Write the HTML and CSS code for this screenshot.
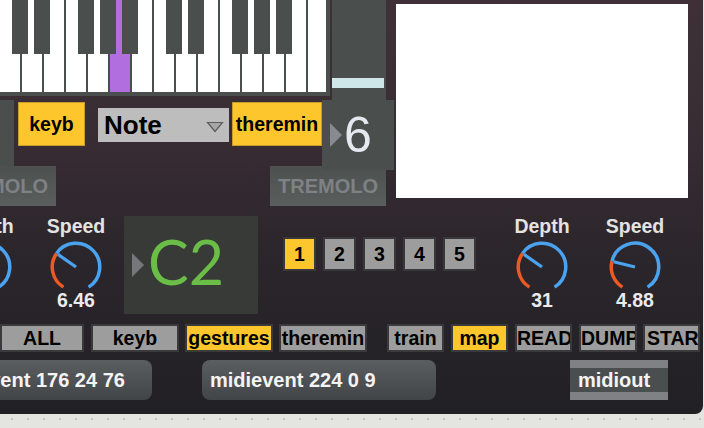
FILE: index.html
```html
<!DOCTYPE html>
<html>
<head>
<meta charset="utf-8">
<title>Patcher</title>
<link rel="stylesheet" href="styles.css">
</head>
<body>
<div class="patcher">
  <div class="top">
    <div class="left-col">
      <div class="row-a">
        <div class="keyboard">
          <div class="whites">
            <div class="wk"></div><div class="wk"></div><div class="wk"></div><div class="wk"></div><div class="wk"></div>
            <div class="wk on"></div><div class="wk"></div><div class="wk"></div><div class="wk"></div><div class="wk"></div>
            <div class="wk"></div><div class="wk"></div><div class="wk"></div><div class="wk"></div><div class="wk"></div>
          </div>
          <div class="blacks">
            <div class="bk first"></div><div class="bk"></div>
            <div class="bk skip"></div><div class="bk"></div><div class="bk"></div>
            <div class="bk skip"></div><div class="bk"></div>
            <div class="bk skip"></div><div class="bk"></div><div class="bk"></div>
          </div>
        </div>
        <div class="slider"><div class="thumb"></div></div>
      </div>
      <div class="row-b">
        <div class="stub"></div>
        <div class="tog tog-keyb">keyb</div>
        <div class="menu"><span>Note</span>
          <svg class="menu-arrow" width="18" height="12" viewBox="0 0 18 12"><polygon points="1.5,1.5 16.5,1.5 9,10.5" fill="#a6a6a6" stroke="#5c5c5c" stroke-width="1.2"/></svg>
        </div>
        <div class="tog tog-ther">theremin</div>
        <div class="numbox"><span class="tri"></span><span class="num">6</span></div>
      </div>
      <div class="row-c">
        <div class="trem trem-l">TREMOLO</div>
        <div class="trem trem-r">TREMOLO</div>
      </div>
    </div>
    <div class="lcd"></div>
  </div>

  <div class="mid">
    <div class="dial dial-depth-l">
      <div class="dlabel">Depth</div>
      <svg viewBox="0 0 64 54" width="64" height="54">
        <path class="arc-on" d="M19.41 51.14 A23.75 23.75 0 0 1 12.54 17.38"/>
        <path class="arc-off" d="M12.54 17.38 A23.75 23.75 0 1 1 44.59 51.14"/>
        <path class="needle" d="M32 31 L13.98 18.38"/>
      </svg>
      <div class="dval">31</div>
    </div>
    <div class="dial dial-speed-l">
      <div class="dlabel">Speed</div>
      <svg viewBox="0 0 64 54" width="64" height="54">
        <path class="arc-on" d="M19.41 51.14 A23.75 23.75 0 0 1 12.54 17.38"/>
        <path class="arc-off" d="M12.54 17.38 A23.75 23.75 0 1 1 44.59 51.14"/>
        <path class="needle" d="M32 31 L13.98 18.38"/>
      </svg>
      <div class="dval">6.46</div>
    </div>
    <div class="note-box"><span class="tri"></span><span class="note-name">C2</span></div>
    <div class="nums">
      <div class="nb on">1</div>
      <div class="nb">2</div>
      <div class="nb">3</div>
      <div class="nb">4</div>
      <div class="nb">5</div>
    </div>
    <div class="dial dial-depth-r">
      <div class="dlabel">Depth</div>
      <svg viewBox="0 0 64 54" width="64" height="54">
        <path class="arc-on" d="M19.41 51.14 A23.75 23.75 0 0 1 12.54 17.38"/>
        <path class="arc-off" d="M12.54 17.38 A23.75 23.75 0 1 1 44.59 51.14"/>
        <path class="needle" d="M32 31 L13.98 18.38"/>
      </svg>
      <div class="dval">31</div>
    </div>
    <div class="dial dial-speed-r">
      <div class="dlabel">Speed</div>
      <svg viewBox="0 0 64 54" width="64" height="54">
        <path class="arc-on" d="M19.41 51.14 A23.75 23.75 0 0 1 8.96 25.25"/>
        <path class="arc-off" d="M8.96 25.25 A23.75 23.75 0 1 1 44.59 51.14"/>
        <path class="needle" d="M32 31 L10.65 25.68"/>
      </svg>
      <div class="dval">4.88</div>
    </div>
  </div>

  <div class="btns">
    <div class="tb w84">ALL</div>
    <div class="tb w88 ml7">keyb</div>
    <div class="tb w88 ml6 on">gestures</div>
    <div class="tb w88 ml6">theremin</div>
    <div class="tb w57 ml20">train</div>
    <div class="tb w57 ml7 on">map</div>
    <div class="tb w57 ml7">READ</div>
    <div class="tb w58 ml7">DUMP</div>
    <div class="tb w57 ml6 tb-start">START</div>
  </div>

  <div class="msgs">
    <div class="msg msg1">midievent 176 24 76</div>
    <div class="msg msg2">midievent 224 0 9</div>
    <div class="midiout">midiout</div>
  </div>
</div>
</body>
</html>
```

FILE: styles.css
```css
* { box-sizing: border-box; }

html, body {
  margin: 0;
  padding: 0;
}

body {
  width: 704px;
  height: 428px;
  overflow: hidden;
  background-color: #e4e4e0;
  background-image: radial-gradient(circle, #c2c2be 0 1px, rgba(0,0,0,0) 1.4px);
  background-size: 16px 16px;
  background-position: 4px 11px;
  font-family: "Liberation Sans", Arial, sans-serif;
  font-weight: bold;
}

.patcher {
  width: 703px;
  height: 414px;
  overflow: hidden;
  border-bottom-right-radius: 8px;
  background: linear-gradient(to bottom, #3f3037 0%, #392d34 30%, #2b262b 62%, #212024 100%);
  display: flex;
  flex-direction: column;
}

/* ---------- top section ---------- */
.top {
  display: flex;
  height: 206px;
  flex: none;
}

.left-col {
  width: 394px;
  flex: none;
  display: flex;
  flex-direction: column;
}

.row-a {
  display: flex;
  height: 100px;
  flex: none;
}

.keyboard {
  position: relative;
  width: 330px;
  height: 96px;
  background: #4a4f4e;
  padding: 0 4px 4px 0;
  flex: none;
}

.whites {
  display: flex;
  gap: 2px;
  width: 326px;
  height: 92px;
  overflow: hidden;
}

.wk {
  flex: none;
  width: 20px;
  height: 92px;
  background: #ffffff;
}

.wk.on { background: #b16ede; }

.blacks {
  position: absolute;
  top: 0;
  left: 0;
  display: flex;
}

.bk {
  flex: none;
  width: 16px;
  height: 54px;
  background: #4a4f4e;
  margin-left: 6px;
}

.bk.first { margin-left: 12px; }
.bk.skip { margin-left: 28px; }

.slider {
  width: 54px;
  height: 100px;
  margin-left: 2px;
  background: #4a4e4d;
  padding-top: 78px;
  flex: none;
}

.thumb {
  width: 52px;
  height: 10px;
  background: #cfe6e8;
}

.row-b {
  display: flex;
  align-items: flex-start;
  height: 70px;
  flex: none;
}

.stub {
  width: 14px;
  height: 66px;
  background: #4a4e4d;
  flex: none;
}

.tog {
  flex: none;
  height: 44px;
  margin-top: 2px;
  background: #fdc62d;
  border: 1px solid #c99c2a;
  color: #000;
  font-size: 19.5px;
  display: flex;
  align-items: center;
  justify-content: center;
  white-space: nowrap;
}

.tog-keyb { width: 67px; margin-left: 4px; }
.tog-ther { width: 90px; margin-left: 3px; }

.menu {
  flex: none;
  width: 131px;
  height: 34px;
  margin-top: 8px;
  margin-left: 13px;
  background: #bdbdbd;
  display: flex;
  align-items: center;
  padding-left: 6px;
  font-size: 26px;
  color: #000;
}

.menu-arrow {
  display: block;
  margin-left: auto;
  margin-right: 5px;
  margin-top: 4px;
}

.numbox {
  position: relative;
  z-index: 1;
  flex: none;
  width: 72px;
  height: 70px;
  background: #4a4e4d;
  display: flex;
  align-items: center;
  padding-left: 8px;
}

.tri {
  display: block;
  width: 0;
  height: 0;
  border-left: 12px solid #878a8f;
  border-top: 12px solid transparent;
  border-bottom: 12px solid transparent;
  flex: none;
}

.num {
  font-size: 50px;
  font-weight: normal;
  color: #e6e8ef;
  margin-left: 2px;
  line-height: 1;
}

.row-c {
  display: flex;
  margin-top: -4px;
  height: 40px;
  flex: none;
}

.trem {
  flex: none;
  width: 116px;
  height: 40px;
  background: linear-gradient(to bottom, #4c504f, #5a5e5d);
  color: #7e8185;
  font-size: 20px;
  display: flex;
  align-items: center;
  justify-content: center;
}

.trem-l { margin-left: -60px; }
.trem-r { margin-left: 214px; }

.lcd {
  flex: none;
  width: 292px;
  height: 194px;
  margin: 4px 0 0 2px;
  background: #ffffff;
}

/* ---------- middle section ---------- */
.mid {
  display: flex;
  align-items: flex-start;
  height: 98px;
  margin-top: 10px;
  flex: none;
}

.dial {
  flex: none;
  width: 64px;
  display: flex;
  flex-direction: column;
  align-items: center;
  font-size: 19.5px;
}

.dlabel {
  height: 20px;
  line-height: 20px;
  color: #e3e3e3;
  white-space: nowrap;
}

.dial svg { display: block; }

.dval {
  height: 20px;
  line-height: 20px;
  color: #ebebef;
  white-space: nowrap;
}

.arc-on, .arc-off, .needle {
  fill: none;
  stroke-width: 3.5;
}

.arc-on { stroke: #ea5a24; }
.arc-off { stroke: #4ba3f0; }
.needle { stroke: #4ba3f0; stroke-width: 3.2; }

.dial-depth-l { margin-left: -46px; }
.dial-speed-l { margin-left: 26px; }
.dial-depth-r { margin-left: 34px; }
.dial-speed-r { margin-left: 29px; }

.note-box {
  flex: none;
  width: 134px;
  height: 98px;
  margin-left: 16px;
  background: #383a37;
  display: flex;
  align-items: center;
  padding-left: 8px;
}

.note-box .tri { border-left-color: #76777c; }

.note-name {
  font-family: "Lato", "Liberation Sans", sans-serif;
  font-weight: normal;
  font-size: 61px;
  line-height: 61px;
  color: #6abd47;
  margin-left: 4px;
  margin-bottom: 7px;
}

.nums {
  flex: none;
  display: flex;
  gap: 7px;
  margin-left: 25px;
  margin-top: 21px;
}

.nb {
  width: 33px;
  height: 34px;
  border: 2px solid #38373a;
  background: #9d9d9d;
  color: #000;
  font-size: 19.5px;
  display: flex;
  align-items: center;
  justify-content: center;
}

.nb.on { background: #fdc62d; }

/* ---------- buttons row ---------- */
.btns {
  display: flex;
  height: 28px;
  margin-top: 10px;
  flex: none;
}

.tb {
  flex: none;
  height: 28px;
  border: 2px solid #3a393c;
  background: #9d9d9d;
  color: #000;
  font-size: 19.5px;
  line-height: 25px;
  text-align: center;
  white-space: nowrap;
  overflow: hidden;
}

.tb.on { background: #fdc62d; }

.tb-start {
  text-align: left;
  padding-left: 2px;
}

.w84 { width: 84px; }
.w88 { width: 88px; }
.w57 { width: 57px; }
.w58 { width: 58px; }
.ml6 { margin-left: 6px; }
.ml7 { margin-left: 7px; }
.ml20 { margin-left: 20px; }

/* ---------- message row ---------- */
.msgs {
  display: flex;
  height: 40px;
  margin-top: 8px;
  flex: none;
}

.msg {
  flex: none;
  height: 40px;
  border-radius: 8px;
  background: linear-gradient(to bottom, #5b5e60, #424547);
  color: #f4f4f4;
  font-size: 20px;
  padding-left: 8px;
  display: flex;
  align-items: center;
  white-space: nowrap;
  overflow: hidden;
}

.msg1 { width: 223px; margin-left: -71px; }
.msg2 { width: 234px; margin-left: 50px; }

.midiout {
  flex: none;
  width: 98px;
  height: 40px;
  margin-left: 134px;
  background: linear-gradient(to bottom, #7f8184 0, #7f8184 8px, #4b4e4e 8px, #4b4e4e 32px, #7f8184 32px);
  color: #f4f4f4;
  font-size: 20px;
  padding-left: 8px;
  display: flex;
  align-items: center;
  white-space: nowrap;
}
```
